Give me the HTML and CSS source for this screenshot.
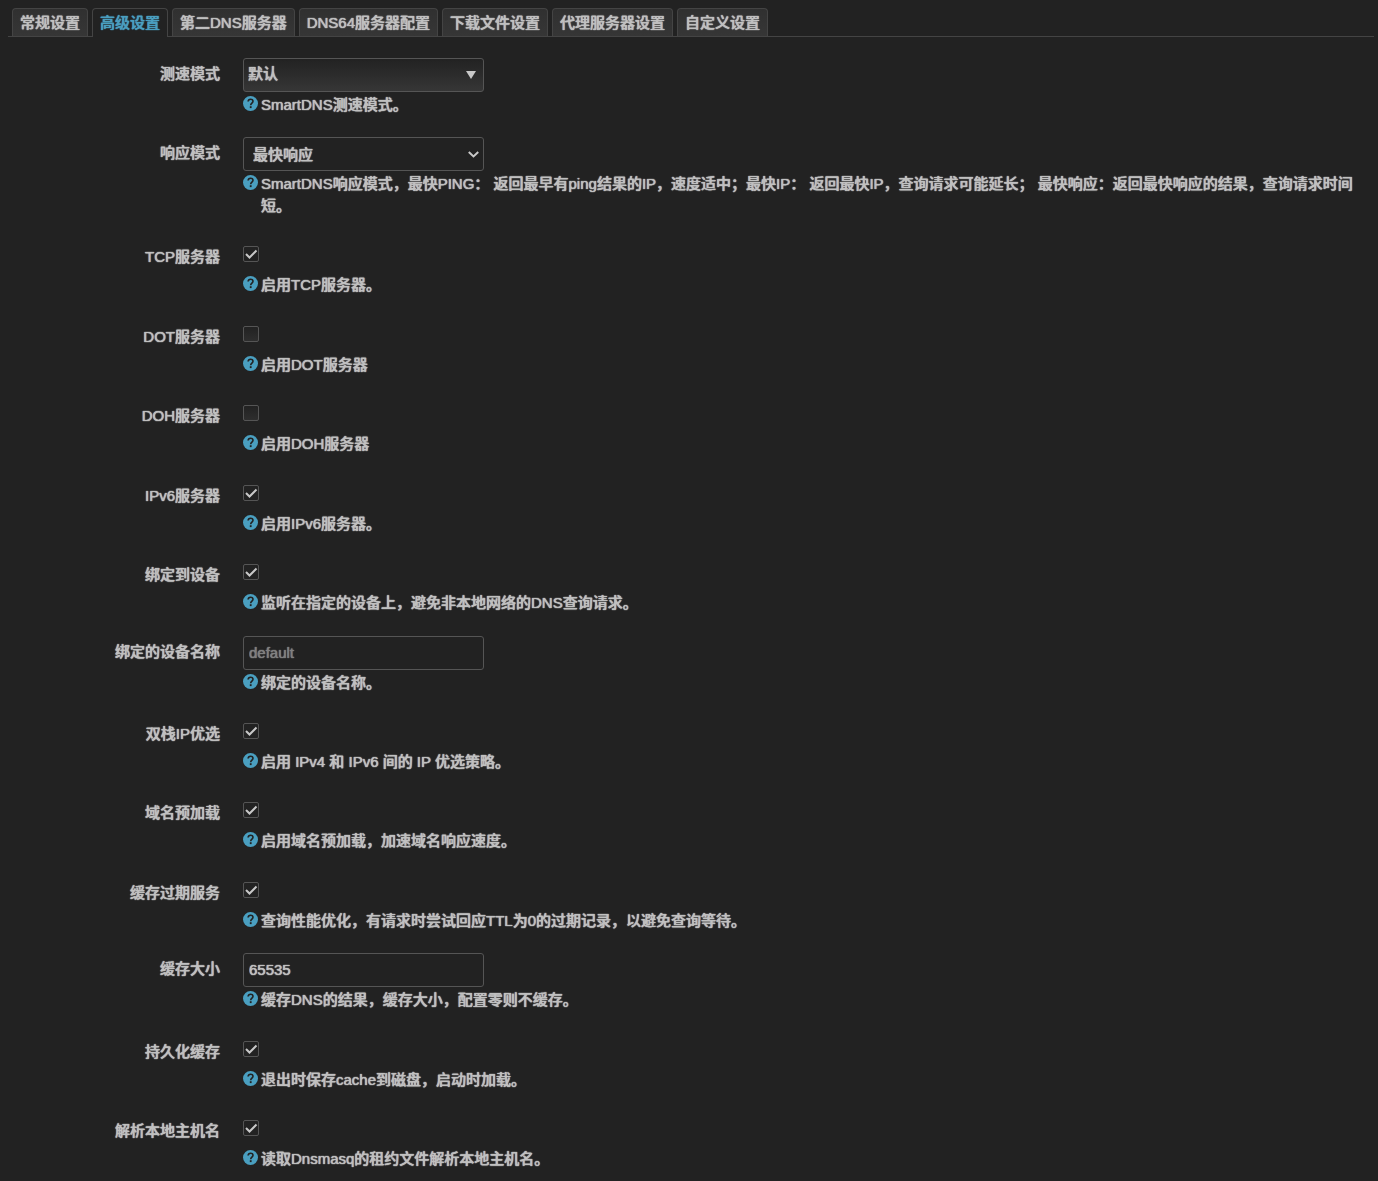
FILE: index.html
```html
<!DOCTYPE html>
<html lang="zh-CN">
<head>
  <meta charset="UTF-8" />
  <meta name="viewport" content="width=device-width, initial-scale=1" />
  <title>SmartDNS</title>
  <link rel="stylesheet" href="styles.css">
</head>
<body>
  <svg class="sprite" aria-hidden="true">
    <symbol id="help" viewBox="0 0 15 15">
      <circle cx="7.5" cy="7.5" r="7.5" fill="#4a9fc0"/>
      <path d="M5.1 5.5C5.2 4 6.2 3.2 7.6 3.2C9 3.2 10 4 10 5.3C10 7 7.7 7.1 7.7 9.2" fill="none" stroke="#222" stroke-width="1.6"/>
      <rect x="6.8" y="10.2" width="1.8" height="1.9" fill="#222"/>
    </symbol>
  </svg>

  <nav class="tabs">
    <a class="tab" href="#">常规设置</a>
    <a class="tab active" href="#">高级设置</a>
    <a class="tab" href="#">第二DNS服务器</a>
    <a class="tab" href="#">DNS64服务器配置</a>
    <a class="tab" href="#">下载文件设置</a>
    <a class="tab" href="#">代理服务器设置</a>
    <a class="tab" href="#">自定义设置</a>
  </nav>

  <form class="settings">
    <div class="row">
      <label class="title" for="speed">测速模式</label>
      <div class="field">
        <div class="control">
          <div class="select dropdown">
            <select id="speed"><option>默认</option></select>
            <svg class="arrow" viewBox="0 0 10 8"><path d="M0 0H10L5 8Z" fill="#c8c8c8"/></svg>
          </div>
        </div>
        <div class="help"><svg><use href="#help"/></svg><span>SmartDNS测速模式。</span></div>
      </div>
    </div>
    <div class="row">
      <label class="title" for="response">响应模式</label>
      <div class="field">
        <div class="control">
          <div class="select native">
            <select id="response"><option>最快响应</option></select>
            <svg class="arrow" viewBox="0 0 10 6"><path d="M.7 .7L5 4.8L9.3 .7" fill="none" stroke="#c8c8c8" stroke-width="1.8"/></svg>
          </div>
        </div>
        <div class="help"><svg><use href="#help"/></svg><span>SmartDNS响应模式，最快PING： 返回最早有ping结果的IP，速度适中；最快IP： 返回最快IP，查询请求可能延长； 最快响应：返回最快响应的结果，查询请求时间短。</span></div>
      </div>
    </div>
    <div class="row check">
      <label class="title" for="tcp">TCP服务器</label>
      <div class="field">
        <div class="control"><input type="checkbox" id="tcp" checked></div>
        <div class="help"><svg><use href="#help"/></svg><span>启用TCP服务器。</span></div>
      </div>
    </div>
    <div class="row check">
      <label class="title" for="dot">DOT服务器</label>
      <div class="field">
        <div class="control"><input type="checkbox" id="dot"></div>
        <div class="help"><svg><use href="#help"/></svg><span>启用DOT服务器</span></div>
      </div>
    </div>
    <div class="row check">
      <label class="title" for="doh">DOH服务器</label>
      <div class="field">
        <div class="control"><input type="checkbox" id="doh"></div>
        <div class="help"><svg><use href="#help"/></svg><span>启用DOH服务器</span></div>
      </div>
    </div>
    <div class="row check">
      <label class="title" for="ipv6">IPv6服务器</label>
      <div class="field">
        <div class="control"><input type="checkbox" id="ipv6" checked></div>
        <div class="help"><svg><use href="#help"/></svg><span>启用IPv6服务器。</span></div>
      </div>
    </div>
    <div class="row check">
      <label class="title" for="bind">绑定到设备</label>
      <div class="field">
        <div class="control"><input type="checkbox" id="bind" checked></div>
        <div class="help"><svg><use href="#help"/></svg><span>监听在指定的设备上，避免非本地网络的DNS查询请求。</span></div>
      </div>
    </div>
    <div class="row">
      <label class="title" for="device">绑定的设备名称</label>
      <div class="field">
        <div class="control"><input type="text" id="device" placeholder="default"></div>
        <div class="help"><svg><use href="#help"/></svg><span>绑定的设备名称。</span></div>
      </div>
    </div>
    <div class="row check">
      <label class="title" for="dualstack">双栈IP优选</label>
      <div class="field">
        <div class="control"><input type="checkbox" id="dualstack" checked></div>
        <div class="help"><svg><use href="#help"/></svg><span>启用 IPv4 和 IPv6 间的 IP 优选策略。</span></div>
      </div>
    </div>
    <div class="row check">
      <label class="title" for="prefetch">域名预加载</label>
      <div class="field">
        <div class="control"><input type="checkbox" id="prefetch" checked></div>
        <div class="help"><svg><use href="#help"/></svg><span>启用域名预加载，加速域名响应速度。</span></div>
      </div>
    </div>
    <div class="row check">
      <label class="title" for="expired">缓存过期服务</label>
      <div class="field">
        <div class="control"><input type="checkbox" id="expired" checked></div>
        <div class="help"><svg><use href="#help"/></svg><span>查询性能优化，有请求时尝试回应TTL为0的过期记录，以避免查询等待。</span></div>
      </div>
    </div>
    <div class="row">
      <label class="title" for="cachesize">缓存大小</label>
      <div class="field">
        <div class="control"><input type="text" id="cachesize" value="65535"></div>
        <div class="help"><svg><use href="#help"/></svg><span>缓存DNS的结果，缓存大小，配置零则不缓存。</span></div>
      </div>
    </div>
    <div class="row check">
      <label class="title" for="persist">持久化缓存</label>
      <div class="field">
        <div class="control"><input type="checkbox" id="persist" checked></div>
        <div class="help"><svg><use href="#help"/></svg><span>退出时保存cache到磁盘，启动时加载。</span></div>
      </div>
    </div>
    <div class="row check">
      <label class="title" for="hostname">解析本地主机名</label>
      <div class="field">
        <div class="control"><input type="checkbox" id="hostname" checked></div>
        <div class="help"><svg><use href="#help"/></svg><span>读取Dnsmasq的租约文件解析本地主机名。</span></div>
      </div>
    </div>
  </form>
</body>
</html>
```

FILE: styles.css
```css
* { box-sizing: border-box; }
body {
  margin: 0;
  padding: 8px 4px 0 8px;
  background: #222;
  color: #c0c0c0;
  font: 500 15px/1.43 "Liberation Sans", "Noto Sans CJK SC", sans-serif;
  text-shadow: 0 0 1px currentColor, 0 0 1px currentColor;
}
.sprite { display: none; }

.tabs { display: flex; gap: 4px; padding: 0 4px; border-bottom: 1px solid #444; }
.tab {
  height: 28px;
  padding: 3px 7px;
  border: 1px solid #444;
  border-bottom: 0;
  border-radius: 4px 4px 0 0;
  background: linear-gradient(#303030, #363636);
  color: inherit;
  text-decoration: none;
}
.tab.active { height: 29px; margin-bottom: -1px; background: #222; color: #4a9fc0; }

.settings { padding: 21px 18px 0 0; }
.row { display: flex; gap: 23px; margin-bottom: 22px; }
.row:last-child { margin-bottom: 0; }
.title { flex: none; width: 212px; padding-top: 5px; text-align: right; }
.check .title { padding-top: 8px; }
.field { flex: 1; min-width: 0; }
.control { height: 36px; }
.check .control { padding-top: 8px; }

input, select { font: inherit; color: inherit; text-shadow: inherit; margin: 0; }
input[type="text"], select {
  display: block;
  width: 241px;
  height: 34px;
  padding: 0 5px 1px;
  border: 1px solid #555;
  border-radius: 3px;
  background: #222;
}
input::placeholder { color: #808080; opacity: 1; }

.select { position: relative; width: 241px; }
select { appearance: none; }
.dropdown select { padding: 0 4px 2px; background: linear-gradient(#222, #363636); }
.native select { padding: 0 9px; }
.arrow { position: absolute; pointer-events: none; }
.dropdown .arrow { top: 13px; right: 8px; width: 10px; height: 8px; }
.native .arrow { top: 14px; right: 5px; width: 11px; height: 7px; }

input[type="checkbox"] {
  appearance: none;
  display: block;
  width: 16px;
  height: 16px;
  border: 1px solid #555;
  border-radius: 2px;
  background: linear-gradient(#222, #2e2e2e);
}
input[type="checkbox"]:checked {
  background: url("data:image/svg+xml,%3Csvg xmlns='http://www.w3.org/2000/svg' viewBox='0 0 14 14'%3E%3Cpath d='M2 7L5.5 10.5L12.5 3.5' fill='none' stroke='%23c8c8c8' stroke-width='2'/%3E%3C/svg%3E");
}

.help { display: flex; gap: 3px; }
.help svg { flex: none; width: 15px; height: 15px; margin-top: 2px; }
```
